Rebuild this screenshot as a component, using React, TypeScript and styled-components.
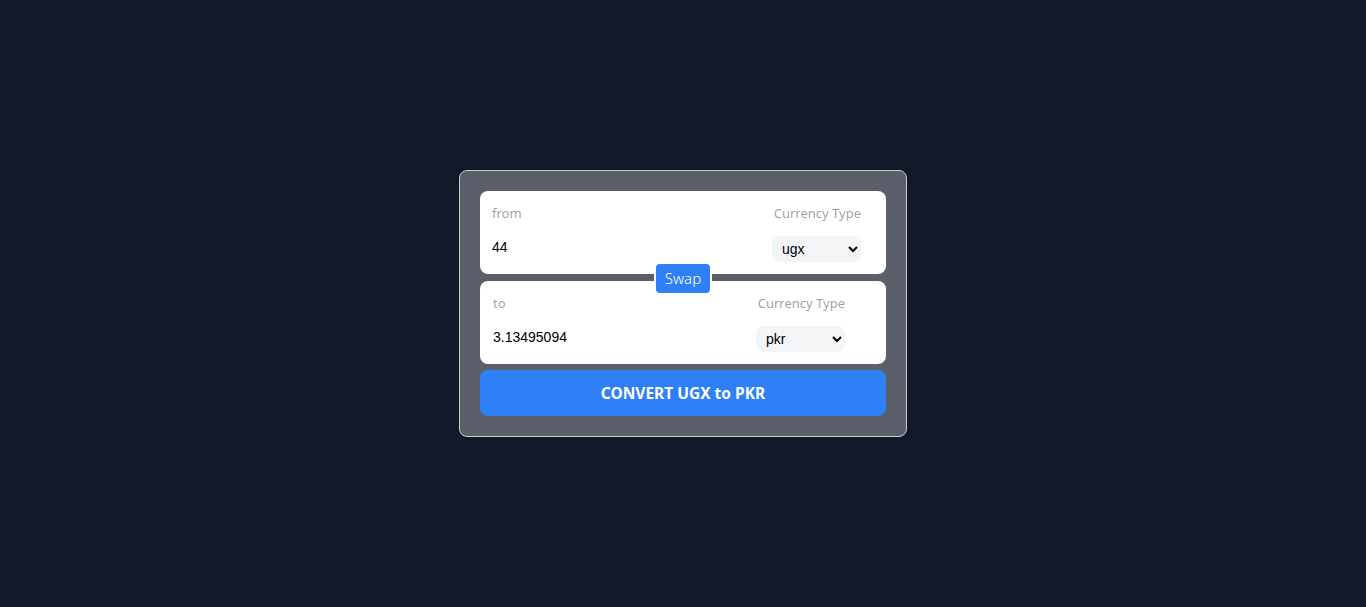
import React, { useState } from "react";
import styled, { createGlobalStyle } from "styled-components";

const Global = createGlobalStyle`
  html, body { margin: 0; padding: 0; background: #111827; }
  body { font-family: "Noto Sans", "Open Sans", sans-serif; }
  * { box-sizing: border-box; }
`;

const Page = styled.div`
  width: 100%;
  height: 607px;
  display: flex;
  align-items: center;
  justify-content: center;
`;

const Card = styled.form`
  width: 448px;
  border: 1px solid #c9ccd1;
  border-radius: 8px;
  padding: 20px;
  background: #5a5f6a;
  display: flex;
  flex-direction: column;
`;

const Box = styled.div<{ $right: number }>`
  height: 83px;
  flex: none;
  background: #ffffff;
  border-radius: 8px;
  padding: 12px ${(p) => p.$right}px 12px 12px;
  display: flex;
  font-size: 14px;
`;

const LeftCol = styled.div<{ $shift: number }>`
  flex: 1;
  display: flex;
  flex-direction: column;
  padding-left: ${(p) => p.$shift}px;
`;

const RightCol = styled.div`
  display: flex;
  flex-direction: column;
  align-items: flex-end;
`;

const Label = styled.label`
  color: rgba(0, 0, 0, 0.4);
  line-height: 20px;
  font-size: 13px;
`;

const AmountInput = styled.input`
  margin-top: 8px;
  height: 31px;
  border: none;
  outline: none;
  padding: 0;
  background: transparent;
  font-family: "Liberation Sans", Arial, sans-serif;
  font-size: 14px;
  color: #000;
  width: 100%;
`;

const Select = styled.select`
  margin-top: 13px;
  width: 89px;
  height: 27px;
  border: none;
  border-radius: 8px;
  background: #f3f4f6;
  padding: 0 4px 0 6px;
  font-family: "Liberation Sans", Arial, sans-serif;
  font-size: 14px;
  color: #000;
  outline: none;
  cursor: pointer;
`;

const Divider = styled.div`
  position: relative;
  flex: none;
  height: 7px;
  width: 100%;
`;

const SwapButton = styled.button`
  position: absolute;
  left: 174px;
  top: -12px;
  width: 58px;
  height: 33px;
  padding: 0;
  border: 2px solid #ffffff;
  border-radius: 6px;
  background: #2f7ff7;
  color: #ffffff;
  font-family: "Noto Sans", sans-serif;
  font-size: 15px;
  font-weight: 300;
  line-height: 29px;
  text-align: center;
  cursor: pointer;
`;

const ConvertButton = styled.button`
  margin-top: 6px;
  flex: none;
  height: 46px;
  width: 100%;
  border: none;
  border-radius: 8px;
  background: #2f7ff7;
  color: #ffffff;
  font-family: "Noto Sans", sans-serif;
  font-size: 15.5px;
  font-weight: 700;
  cursor: pointer;
`;

type InputBoxProps = {
  label: string;
  amount: string;
  currency: string;
  options: string[];
  right: number;
  shift: number;
  onAmount: (v: string) => void;
  onCurrency: (v: string) => void;
};

function InputBox({ label, amount, currency, options, right, shift, onAmount, onCurrency }: InputBoxProps) {
  return (
    <Box $right={right}>
      <LeftCol $shift={shift}>
        <Label>{label}</Label>
        <AmountInput type="number" value={amount} onChange={(e) => onAmount(e.target.value)} />
      </LeftCol>
      <RightCol>
        <Label>Currency Type</Label>
        <Select value={currency} onChange={(e) => onCurrency(e.target.value)}>
          {options.map((o) => (
            <option key={o} value={o}>
              {o}
            </option>
          ))}
        </Select>
      </RightCol>
    </Box>
  );
}

const currencies = ["usd", "inr", "ugx", "pkr", "eur", "gbp"];

export default function App() {
  const [from, setFrom] = useState("ugx");
  const [to, setTo] = useState("pkr");
  const [amount, setAmount] = useState("44");
  const [converted, setConverted] = useState("3.13495094");

  const swap = () => {
    setFrom(to);
    setTo(from);
    setAmount(converted);
    setConverted(amount);
  };

  return (
    <>
      <Global />
      <Page>
        <Card onSubmit={(e) => e.preventDefault()}>
          <InputBox
            label="from"
            amount={amount}
            currency={from}
            options={currencies}
            right={25}
            shift={0}
            onAmount={setAmount}
            onCurrency={setFrom}
          />
          <Divider>
            <SwapButton type="button" onClick={swap}>
              Swap
            </SwapButton>
          </Divider>
          <InputBox
            label="to"
            amount={converted}
            currency={to}
            options={currencies}
            right={41}
            shift={1}
            onAmount={setConverted}
            onCurrency={setTo}
          />
          <ConvertButton type="submit">
            CONVERT {from.toUpperCase()} to {to.toUpperCase()}
          </ConvertButton>
        </Card>
      </Page>
    </>
  );
}
